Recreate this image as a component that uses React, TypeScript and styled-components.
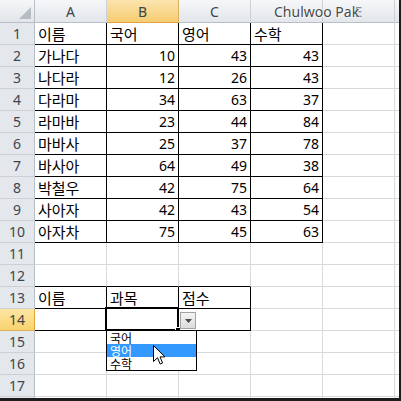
import React from 'react';
import styled, { createGlobalStyle } from 'styled-components';

const Global = createGlobalStyle`
  html, body { margin: 0; padding: 0; background: #fff; overflow: hidden; }
  * { box-sizing: border-box; }
`;

const Frame = styled.div`
  position: relative;
  width: 401px;
  height: 401px;
  border-right: 2px solid #1c1c1c;
  border-bottom: 3px solid #1c1c1c;
  overflow: hidden;
  background: #fff;
`;

const Sheet = styled.div`
  display: grid;
  grid-template-columns: 35px repeat(6, 72px);
  grid-template-rows: 23px repeat(18, 22px);
`;

const Corner = styled.div`
  position: relative;
  background: linear-gradient(#f4f6f8, #e2e5e9);
  border-right: 1px solid #b9bfc7;
  border-bottom: 1px solid #b9bfc7;
`;

const CornerTri = styled.svg`
  position: absolute;
  right: 3px;
  bottom: 3px;
`;

const ColHead = styled.div<{ $sel?: boolean; $faint?: boolean }>`
  display: flex;
  align-items: center;
  justify-content: center;
  font-family: "Noto Sans", "Liberation Sans", sans-serif;
  font-size: 14px;
  color: ${(p) => (p.$faint ? '#8a8f96' : '#3f444b')};
  background: ${(p) =>
    p.$sel ? 'linear-gradient(#fbe4ae, #f6cc72)' : 'linear-gradient(#f5f7f9, #e3e6ea)'};
  border-right: 1px solid ${(p) => (p.$sel ? '#d9b161' : '#cdd1d6')};
  border-bottom: 1px solid ${(p) => (p.$sel ? '#e1a53c' : '#b9bfc7')};
`;

const RowHead = styled.div<{ $sel?: boolean }>`
  display: flex;
  align-items: center;
  justify-content: center;
  font-family: "Noto Sans", "Liberation Sans", sans-serif;
  font-size: 14px;
  color: #3f444b;
  background: ${(p) => (p.$sel ? 'linear-gradient(#fde6a4, #f9d36c)' : '#e4e7eb')};
  border-right: 1px solid ${(p) => (p.$sel ? '#e1a53c' : '#b9bfc7')};
  border-bottom: 1px solid ${(p) => (p.$sel ? '#d9b161' : '#cdd1d6')};
`;

const Cell = styled.div<{ $num?: boolean; $br?: boolean; $bb?: boolean }>`
  position: relative;
  display: flex;
  align-items: flex-end;
  justify-content: ${(p) => (p.$num ? 'flex-end' : 'flex-start')};
  padding: 0 ${(p) => (p.$num ? '3px' : '0')} 1px ${(p) => (p.$num ? '0' : '3px')};
  font-family: ${(p) =>
    p.$num ? '"Noto Sans", "Liberation Sans", sans-serif' : '"Noto Sans CJK KR", sans-serif'};
  font-size: ${(p) => (p.$num ? '14px' : '15px')};
  line-height: 19px;
  color: #000;
  white-space: nowrap;
  border-right: 1px solid ${(p) => (p.$br ? '#000' : '#d9d9d9')};
  border-bottom: 1px solid ${(p) => (p.$bb ? '#000' : '#d9d9d9')};
`;

const Selection = styled.div`
  position: absolute;
  left: -2px;
  top: -2px;
  right: -1px;
  bottom: -1px;
  border: 2px solid #000;
  pointer-events: none;
`;

const Handle = styled.div`
  position: absolute;
  right: -4px;
  bottom: -4px;
  width: 6px;
  height: 6px;
  background: #000;
  border: 1px solid #fff;
`;

const DropButton = styled.div`
  position: absolute;
  left: 73px;
  top: 3px;
  width: 16px;
  height: 17px;
  border: 1px solid #a3a3a3;
  background: linear-gradient(#f4f4f4, #dcdcdc);
  display: flex;
  align-items: center;
  justify-content: center;
`;

const DropList = styled.div`
  position: absolute;
  left: -1px;
  top: 21px;
  width: 91px;
  border: 1px solid #000;
  background: #fff;
  display: flex;
  flex-direction: column;
  z-index: 2;
`;

const DropItem = styled.div<{ $hi?: boolean }>`
  height: 13px;
  line-height: 14px;
  padding-left: 3px;
  font-family: "Noto Sans CJK KR", sans-serif;
  font-size: 12px;
  color: ${(p) => (p.$hi ? '#fff' : '#000')};
  background: ${(p) => (p.$hi ? '#3399ff' : 'transparent')};
`;

const Cursor = styled.svg`
  position: absolute;
  left: 46px;
  top: 36px;
  z-index: 3;
`;

const Watermark = styled.div`
  position: absolute;
  left: 274px;
  top: 2px;
  font-family: "Noto Sans", "Liberation Sans", sans-serif;
  font-size: 14px;
  color: #4a4a4a;
  text-shadow: 0 0 2px #fff, 1px 1px 0 rgba(255, 255, 255, 0.7);
  white-space: nowrap;
`;

const COLS = ['A', 'B', 'C', 'D', 'E', 'F'];

const DATA: Record<number, (string | number)[]> = {
  1: ['이름', '국어', '영어', '수학'],
  2: ['가나다', 10, 43, 43],
  3: ['나다라', 12, 26, 43],
  4: ['다라마', 34, 63, 37],
  5: ['라마바', 23, 44, 84],
  6: ['마바사', 25, 37, 78],
  7: ['바사아', 64, 49, 38],
  8: ['박철우', 42, 75, 64],
  9: ['사아자', 42, 43, 54],
  10: ['아자차', 75, 45, 63],
  13: ['이름', '과목', '점수'],
};

function borders(r: number, c: number) {
  let br = false;
  let bb = false;
  if (r >= 1 && r <= 10 && c <= 3) {
    br = true;
    bb = true;
  }
  if (r === 12 && c <= 2) bb = true;
  if ((r === 13 || r === 14) && c <= 2) {
    br = true;
    bb = true;
  }
  return { br, bb };
}

function ArrowCursor() {
  return (
    <Cursor width="13" height="21" viewBox="0 0 13 21">
      <path
        d="M0.5 0.5 L0.5 16.5 L4.5 12.8 L7.2 19 L9.6 18 L7 11.9 L12 11.9 Z"
        fill="#fff"
        stroke="#000"
        strokeWidth="1"
        strokeLinejoin="miter"
      />
    </Cursor>
  );
}

export default function App() {
  const rows = Array.from({ length: 18 }, (_, i) => i + 1);
  return (
    <Frame>
      <Global />
      <Sheet>
        <Corner>
          <CornerTri width="12" height="12" viewBox="0 0 12 12">
            <path d="M12 0 L12 12 L0 12 Z" fill="#b6bcc4" />
          </CornerTri>
        </Corner>
        {COLS.map((c) => (
          <ColHead key={c} $sel={c === 'B'} $faint={c === 'E'}>
            {c === 'D' || c === 'F' ? '' : c}
          </ColHead>
        ))}
        {rows.map((r) => (
          <React.Fragment key={r}>
            <RowHead $sel={r === 14}>{r <= 17 ? r : ''}</RowHead>
            {COLS.map((c, ci) => {
              const v = DATA[r]?.[ci];
              const { br, bb } = borders(r, ci);
              const isSel = r === 14 && ci === 1;
              return (
                <Cell key={c} $num={typeof v === 'number'} $br={br} $bb={bb}>
                  {v !== undefined ? v : null}
                  {isSel && (
                    <>
                      <Selection>
                        <Handle />
                      </Selection>
                      <DropButton>
                        <svg width="7" height="4" viewBox="0 0 7 4">
                          <path d="M0 0 L7 0 L3.5 4 Z" fill="#4a4a4a" />
                        </svg>
                      </DropButton>
                      <DropList>
                        <DropItem>국어</DropItem>
                        <DropItem $hi>영어</DropItem>
                        <DropItem>수학</DropItem>
                      </DropList>
                      <ArrowCursor />
                    </>
                  )}
                </Cell>
              );
            })}
          </React.Fragment>
        ))}
      </Sheet>
      <Watermark>Chulwoo Pak</Watermark>
    </Frame>
  );
}
